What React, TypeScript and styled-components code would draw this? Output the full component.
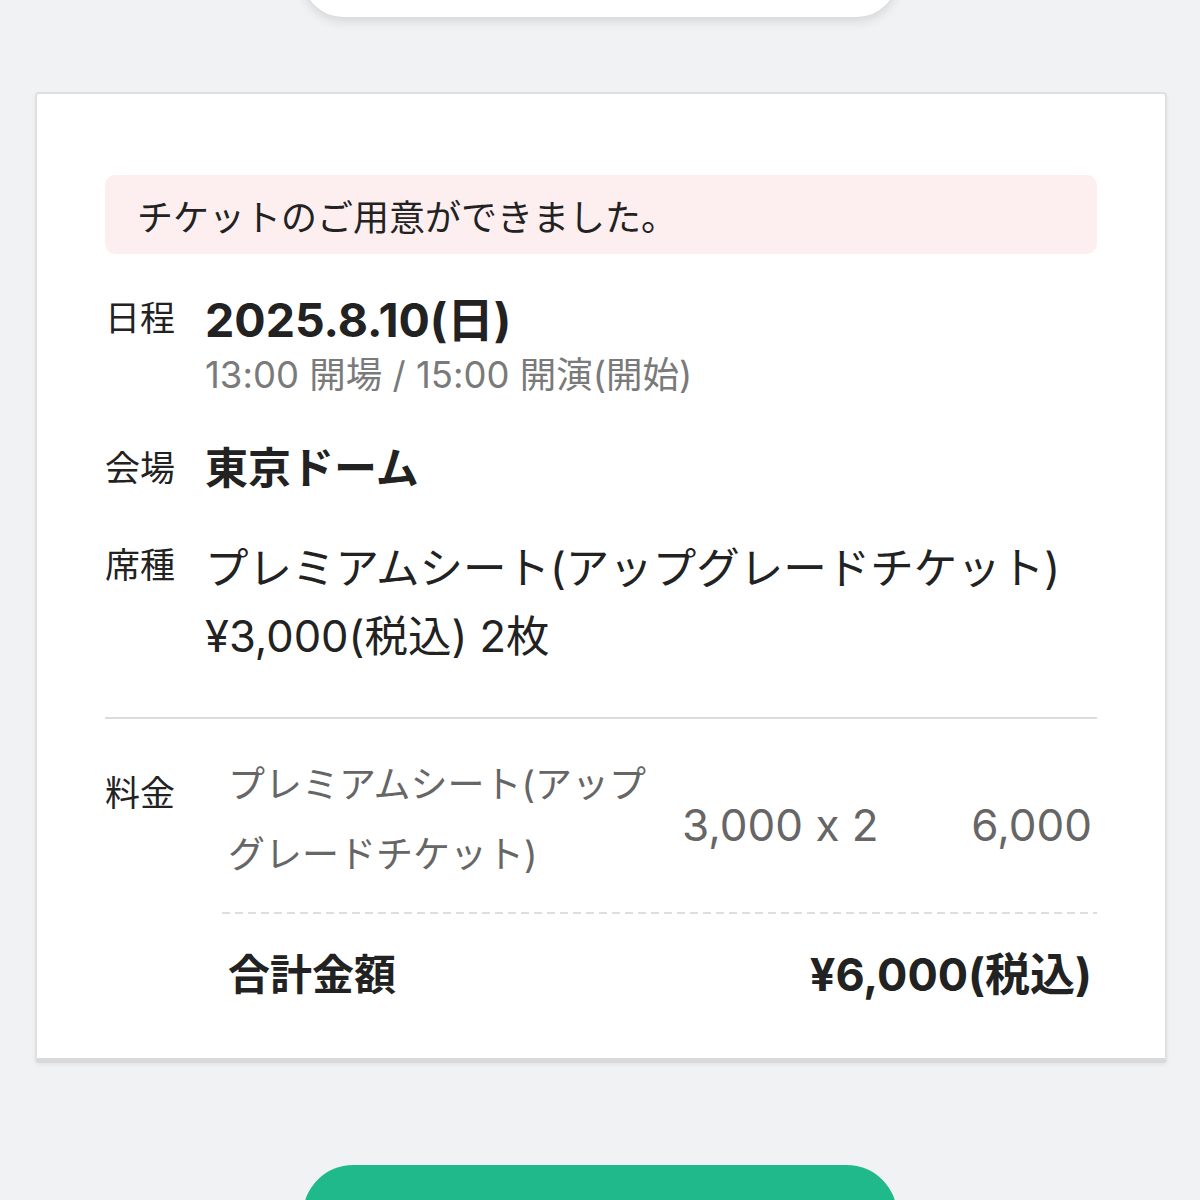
import React from 'react'
import styled, { createGlobalStyle } from 'styled-components'

const GlobalStyle = createGlobalStyle`
  html, body {
    margin: 0;
    padding: 0;
    background: #f1f2f4;
    overflow: hidden;
  }
  body {
    font-family: Inter, "Noto Sans CJK JP", sans-serif;
    font-feature-settings: "calt" 0;
    color: #222;
  }
`

const Page = styled.div`
  display: flex;
  flex-direction: column;
  align-items: center;
  width: 1200px;
  height: 1200px;
`

const TopButton = styled.div`
  width: 594px;
  height: 80px;
  margin-top: -63px;
  flex-shrink: 0;
  background: #fff;
  border-radius: 50px;
  box-shadow: 0 4px 12px rgba(0, 0, 0, 0.12);
`

const Card = styled.section`
  box-sizing: border-box;
  width: 1132px;
  margin-top: 75px;
  margin-left: 2px;
  padding: 81px 68px 55px;
  background: #fff;
  border: 2px solid #e0e0e0;
  border-bottom: 5px solid #d9d9d9;
  border-radius: 4px;
  box-shadow: 0 2px 4px rgba(0, 0, 0, 0.06);
`

const Notice = styled.div`
  height: 79px;
  padding: 0 32px;
  display: flex;
  align-items: center;
  background: #fdeff0;
  border-radius: 10px;
  font-size: 36px;
  color: #222;
`

const InfoList = styled.div`
  display: flex;
  flex-direction: column;
  gap: 38px;
  margin-top: 38px;
`

const Row = styled.div`
  display: grid;
  grid-template-columns: 100px 1fr;
`

const Label = styled.div<{ $lh: number }>`
  font-size: 35px;
  line-height: ${(p) => p.$lh}px;
  color: #222;
  white-space: nowrap;
`

const Values = styled.div`
  display: flex;
  flex-direction: column;
`

const Strong = styled.div<{ $size: number }>`
  font-size: ${(p) => p.$size}px;
  font-weight: 700;
  line-height: 56px;
  color: #222;
`

const SubLine = styled.div`
  font-size: 36.5px;
  line-height: 54px;
  color: #7a7a7a;
`

const Plain = styled.div`
  font-size: 43.5px;
  line-height: 68px;
  color: #222;
  white-space: nowrap;
`

const Divider = styled.hr`
  margin: 47px 0 0;
  border: 0;
  height: 2px;
  background: #dcdcdc;
`

const FeeSection = styled.div`
  display: grid;
  grid-template-columns: 117px 1fr;
  padding-top: 31px;
`

const FeeLabel = styled.div`
  margin-top: 15px;
  font-size: 35px;
  line-height: 56px;
  color: #222;
`

const FeeBody = styled.div`
  display: flex;
  flex-direction: column;
`

const ItemRow = styled.div`
  display: flex;
  padding: 0 5px 0 6px;
`

const ItemName = styled.div`
  flex: 0 0 440px;
  font-size: 37px;
  line-height: 70px;
  color: #666;
`

const ItemNumber = styled.div<{ $grow?: boolean }>`
  align-self: center;
  margin-top: 10px;
  margin-left: ${(p) => (p.$grow ? '0' : '14px')};
  flex: ${(p) => (p.$grow ? '1' : '0 0 auto')};
  text-align: ${(p) => (p.$grow ? 'right' : 'left')};
  font-size: 44px;
  line-height: 56px;
  color: #666;
  white-space: nowrap;
`

const DashedRule = styled.div`
  margin-top: 22px;
  height: 2px;
  background-image: repeating-linear-gradient(to right, #dedede 0 8px, transparent 8px 13px);
`

const TotalRow = styled.div`
  display: flex;
  justify-content: space-between;
  align-items: center;
  padding: 33px 5px 0 6px;
  font-weight: 700;
  color: #222;
`

const TotalLabel = styled.div`
  font-size: 42px;
  line-height: 56px;
`

const TotalValue = styled.div`
  font-size: 45px;
  line-height: 56px;
`

const PrimaryButton = styled.button`
  width: 594px;
  height: 100px;
  margin-top: 102px;
  flex-shrink: 0;
  border: 0;
  border-radius: 50px;
  background: #1fb98c;
`

const App: React.FC = () => (
  <Page>
    <GlobalStyle />
    <TopButton />
    <Card>
      <Notice>チケットのご用意ができました。</Notice>
      <InfoList>
        <Row>
          <Label $lh={52}>日程</Label>
          <Values>
            <Strong $size={46.5}>2025.8.10(日)</Strong>
            <SubLine>13:00 開場 / 15:00 開演(開始)</SubLine>
          </Values>
        </Row>
        <Row>
          <Label $lh={56}>会場</Label>
          <Values>
            <Strong $size={43}>東京ドーム</Strong>
          </Values>
        </Row>
        <Row>
          <Label $lh={62}>席種</Label>
          <Values>
            <Plain>プレミアムシート(アップグレードチケット)</Plain>
            <Plain>¥3,000(税込) 2枚</Plain>
          </Values>
        </Row>
      </InfoList>
      <Divider />
      <FeeSection>
        <FeeLabel>料金</FeeLabel>
        <FeeBody>
          <ItemRow>
            <ItemName>プレミアムシート(アップグレードチケット)</ItemName>
            <ItemNumber>3,000 x 2</ItemNumber>
            <ItemNumber $grow>6,000</ItemNumber>
          </ItemRow>
          <DashedRule />
          <TotalRow>
            <TotalLabel>合計金額</TotalLabel>
            <TotalValue>¥6,000(税込)</TotalValue>
          </TotalRow>
        </FeeBody>
      </FeeSection>
    </Card>
    <PrimaryButton />
  </Page>
)

export default App
